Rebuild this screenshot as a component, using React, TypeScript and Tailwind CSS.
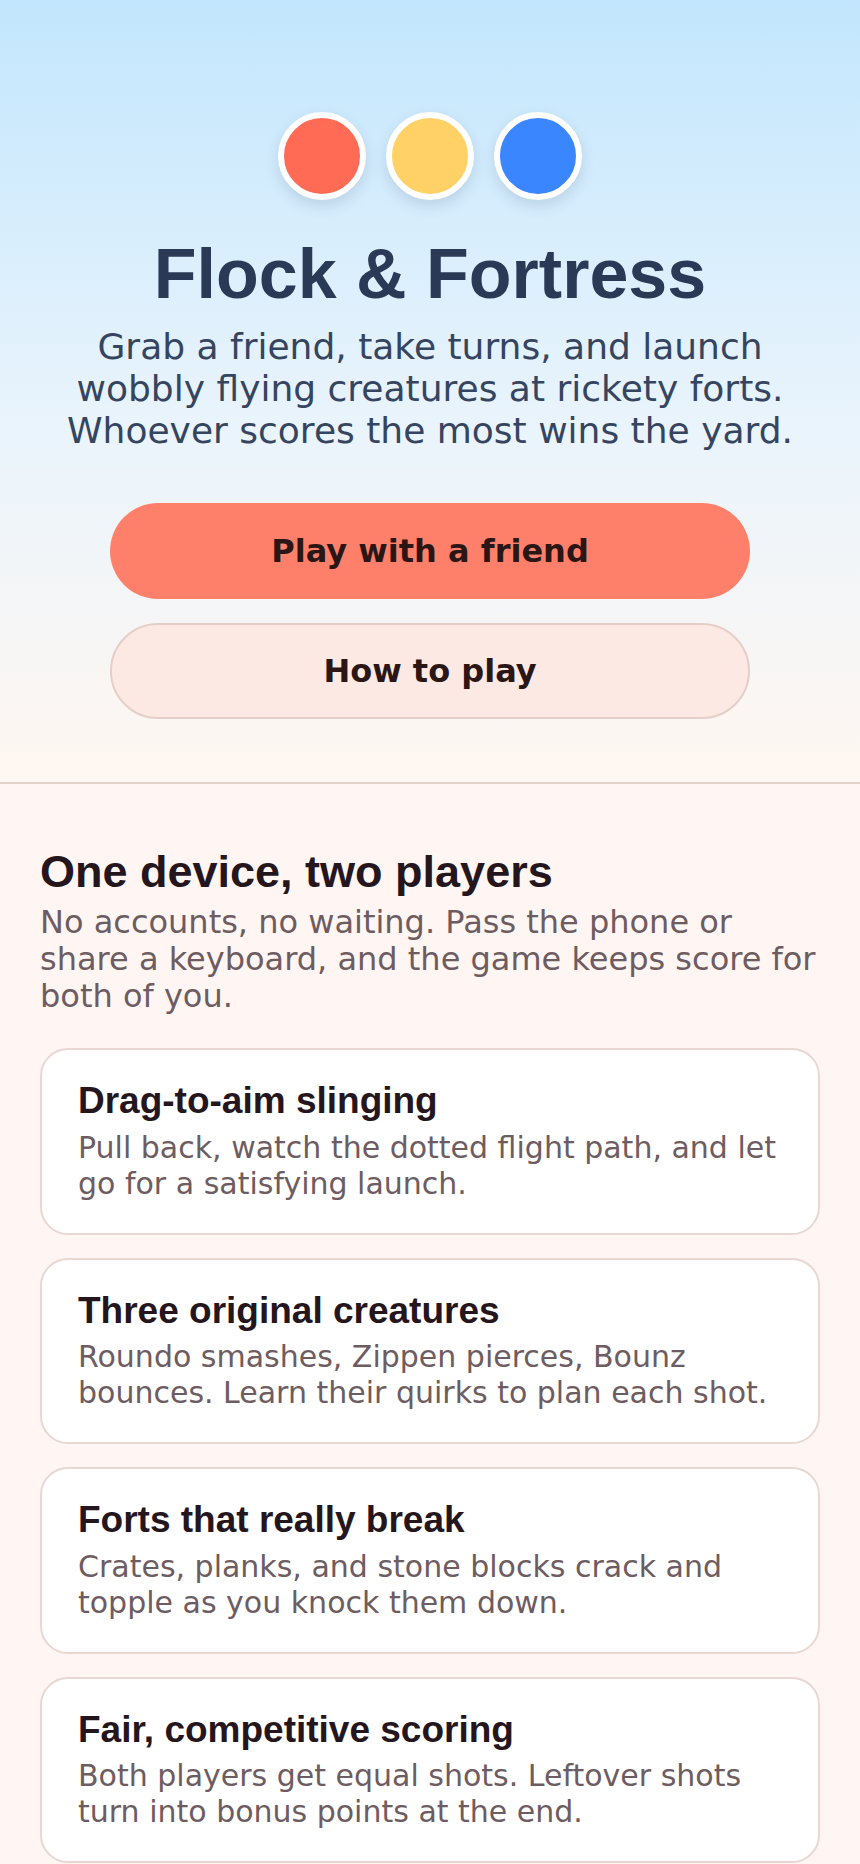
const features = [
  {
    title: "Drag-to-aim slinging",
    body: "Pull back, watch the dotted flight path, and let go for a satisfying launch.",
  },
  {
    title: "Three original creatures",
    body: "Roundo smashes, Zippen pierces, Bounz bounces. Learn their quirks to plan each shot.",
  },
  {
    title: "Forts that really break",
    body: "Crates, planks, and stone blocks crack and topple as you knock them down.",
  },
  {
    title: "Fair, competitive scoring",
    body: "Both players get equal shots. Leftover shots turn into bonus points at the end.",
  },
];

const heading = "font-['Liberation_Sans',Arial,sans-serif] font-bold";

function FeatureCard({ title, body }: { title: string; body: string }) {
  return (
    <div className="rounded-[28px] border-2 border-[#e8d7d2] bg-white px-[36px] pt-[30px] pb-[31px]">
      <h3 className={`${heading} text-[37px] leading-[1.15] text-[#24161c]`}>{title}</h3>
      <p className="mt-[7px] text-[30px] leading-[36px] text-[#6d5c61]">{body}</p>
    </div>
  );
}

export default function App() {
  return (
    <div className="min-h-screen w-full bg-[#fff6f3] font-['DejaVu_Sans',Verdana,sans-serif]">
      {/* Hero */}
      <section className="flex flex-col items-center border-b-2 border-[#e6d0ca] bg-gradient-to-b from-[#c2e6fd] via-[#eaf4fc] via-55% to-[#fff7f1] px-10 pt-[112px] pb-[63px]">
        <div className="flex gap-5">
          <span className="block h-[88px] w-[88px] rounded-full border-[6px] border-white bg-[#ff6b55] shadow-[0_6px_14px_rgba(40,70,110,0.15)]" />
          <span className="block h-[88px] w-[88px] rounded-full border-[6px] border-white bg-[#ffd166] shadow-[0_6px_14px_rgba(40,70,110,0.15)]" />
          <span className="block h-[88px] w-[88px] rounded-full border-[6px] border-white bg-[#3a86ff] shadow-[0_6px_14px_rgba(40,70,110,0.15)]" />
        </div>
        <h1 className={`${heading} mt-[34px] text-[70px] leading-[1.15] text-[#2a3a56]`}>Flock &amp; Fortress</h1>
        <p className="mt-[11px] max-w-[760px] text-center text-[36px] leading-[42px] text-[#36455f]">
          Grab a friend, take turns, and launch wobbly flying creatures at rickety forts. Whoever scores the most wins
          the yard.
        </p>
        <div className="mt-[51px] flex w-[640px] flex-col gap-6">
          <button className="h-[96px] w-full rounded-full bg-[#ff806a] text-[32px] font-bold text-[#2a1614]">
            Play with a friend
          </button>
          <button className="h-[96px] w-full rounded-full border-2 border-[#e5cec8] bg-[#fde9e4] text-[32px] font-bold text-[#2a1614]">
            How to play
          </button>
        </div>
      </section>

      {/* Features */}
      <section className="px-10 pt-[62px] pb-10">
        <h2 className={`${heading} text-[45px] leading-[1.15] text-[#24161c]`}>One device, two players</h2>
        <p className="mt-[7px] text-[32px] leading-[37px] text-[#6d5c61]">
          No accounts, no waiting. Pass the phone or share a keyboard, and the game keeps score for both of you.
        </p>
        <div className="mt-[33px] flex flex-col gap-[23px]">
          {features.map((f) => (
            <FeatureCard key={f.title} title={f.title} body={f.body} />
          ))}
        </div>
      </section>
    </div>
  );
}
